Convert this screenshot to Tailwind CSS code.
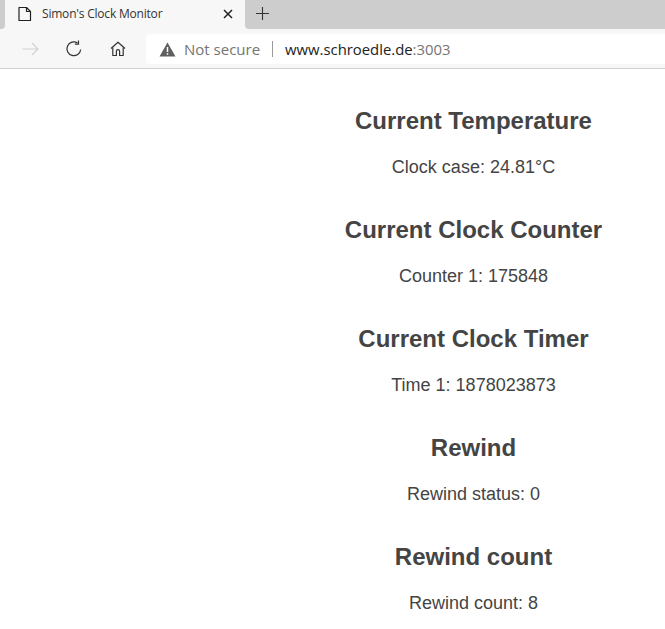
<!DOCTYPE html>
<html lang="en">
<head>
    <meta charset="UTF-8">
    <meta name="viewport" content="width=device-width, initial-scale=1.0">
    <title>Simon's Clock Monitor</title>
    <script src="https://cdn.jsdelivr.net/npm/@tailwindcss/browser@4"></script>
</head>
<body class="bg-white h-[629px] w-[665px] overflow-hidden">
    <!-- tab strip -->
    <div class="h-[30px] bg-[#f7f7f7] flex font-['Open_Sans',sans-serif]">
        <div class="w-[5px] h-[29px] bg-[#cdcdcd] rounded-br-[4px]"></div>
        <div class="w-[240px] h-[30px] bg-[#f7f7f7] flex items-center pl-[12px] pr-[12px] pb-[2px]">
            <svg width="16" height="16" viewBox="0 0 16 16" fill="none" stroke="#222" stroke-width="1.2" stroke-linejoin="round"><path d="M2 1.5h7.5l4 4v9H2z"/><path d="M9.5 1.5v4h4"/></svg>
            <span class="ml-[9px] text-[12px] leading-none text-[#333] tracking-[-0.2px] whitespace-nowrap">Simon's Clock Monitor</span>
            <svg class="ml-auto" width="10" height="10" viewBox="0 0 10 10" stroke="#222" stroke-width="1.5"><path d="M1 1l8 8M9 1l-8 8"/></svg>
        </div>
        <div class="flex-1 h-[29px] bg-[#cdcdcd] rounded-bl-[4px] pl-[10px] pb-[2px] flex items-center">
            <svg width="15" height="15" viewBox="0 0 15 15" stroke="#333" stroke-width="1.1"><path d="M7.5 1v13M1 7.5h13"/></svg>
        </div>
    </div>
    <!-- toolbar -->
    <div class="h-[39px] bg-[#f7f7f7] border-b border-[#d0d0d0] flex items-center font-['Open_Sans',sans-serif]">
        <svg class="ml-[22px]" width="17" height="14" viewBox="0 0 17 14" fill="none" stroke="#d2d2d2" stroke-width="1.2"><path d="M0.5 7h15.5M10 1l6 6-6 6"/></svg>
        <svg class="ml-[26px]" width="18" height="18" viewBox="0 0 18 18" fill="none" stroke="#333" stroke-width="1.2"><path d="M15.7 9.5A6.9 6.9 0 1 1 12.6 3"/><path d="M13.5 0.5v3.6H9.9" /></svg>
        <svg class="ml-[27px]" width="16" height="16" viewBox="0 0 16 16" fill="none" stroke="#333" stroke-width="1.2" stroke-linejoin="round"><path d="M1 7.5L8 1.2l7 6.3"/><path d="M2.8 6.5v8h3.6v-4.2a1.6 1.6 0 0 1 3.2 0v4.2h3.6v-8"/></svg>
        <div class="ml-[20px] flex-1 h-[30px] bg-white rounded-l-[4px] flex items-center pl-[13px]">
            <svg width="17" height="15" viewBox="0 0 17 15"><path d="M8.5 0.5L16.5 14.5H0.5z" fill="#5f5f5f"/><path d="M8.5 5v5M8.5 11.2v1.6" stroke="#fff" stroke-width="1.5"/></svg>
            <span class="ml-[8px] text-[15px] text-[#757575] whitespace-nowrap">Not secure</span>
            <span class="ml-[12px] w-px h-[16px] bg-[#9a9a9a]"></span>
            <span class="ml-[12px] text-[14.85px] text-[#222] whitespace-nowrap">www.schroedle.de<span class="text-[#757575]">:3003</span></span>
        </div>
    </div>
    <!-- page content: the real page is wider than the window, its centre line sits at 473px -->
    <main class="ml-[282px] pt-[35px] text-center text-[#444] font-['Liberation_Sans',sans-serif]">
        <h2 class="text-[24px] leading-[33px] font-bold">Current Temperature</h2>
        <p class="mt-[20px] mb-[36px] text-[18px] leading-[20px]">Clock case: 24.81°C</p>
        <h2 class="text-[24px] leading-[33px] font-bold">Current Clock Counter</h2>
        <p class="mt-[20px] mb-[36px] text-[18px] leading-[20px]">Counter 1: 175848</p>
        <h2 class="text-[24px] leading-[33px] font-bold">Current Clock Timer</h2>
        <p class="mt-[20px] mb-[36px] text-[18px] leading-[20px]">Time 1: 1878023873</p>
        <h2 class="text-[24px] leading-[33px] font-bold">Rewind</h2>
        <p class="mt-[20px] mb-[36px] text-[18px] leading-[20px]">Rewind status: 0</p>
        <h2 class="text-[24px] leading-[33px] font-bold">Rewind count</h2>
        <p class="mt-[20px] mb-[36px] text-[18px] leading-[20px]">Rewind count: 8</p>
    </main>
</body>
</html>
